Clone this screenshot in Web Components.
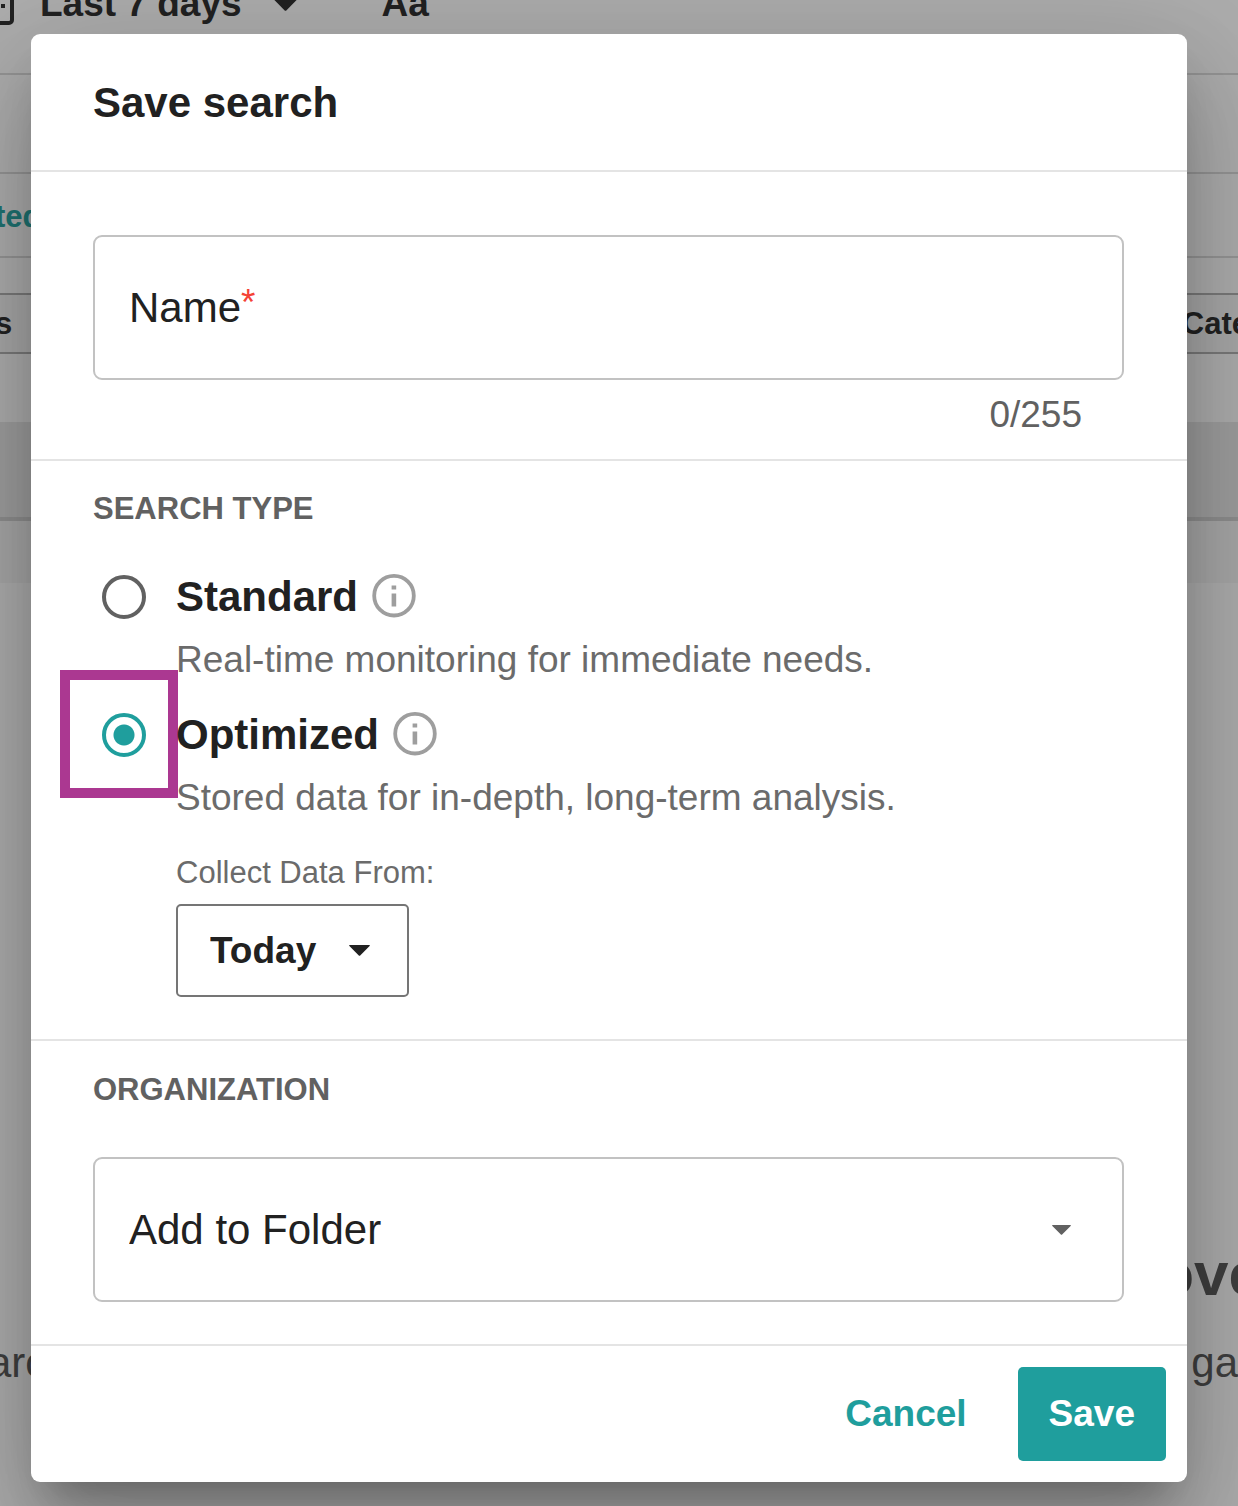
<!DOCTYPE html>
<html lang="en">
<head>
<meta charset="utf-8">
<title>Save search</title>
<style>
  html, body { margin: 0; }
  body {
    --ink: #212121; --muted: #616161; --teal: #1f9e9d; --line: #e4e4e4; --field: #c2c2c2;
    font-family: "Liberation Sans", Arial, sans-serif; color: var(--ink); background: #fff;
  }
</style>
</head>
<body>
<search-app></search-app>

<script>
const define = (name, html, setup) => {
  const template = document.createElement('template');
  template.innerHTML = html;
  customElements.define(name, class extends HTMLElement {
    constructor() {
      super();
      this.attachShadow({ mode: 'open' }).append(template.content.cloneNode(true));
    }
    connectedCallback() { if (setup) setup(this, this.shadowRoot); }
  });
};

/* Filled triangle used by every drop-down */
define('caret-icon', `
  <style>
    :host { display: block; width: 21px; height: 11px; }
    svg { display: block; width: 100%; height: 100%; }
  </style>
  <svg viewBox="0 0 21 11" aria-hidden="true"><path d="M.6 0h19.8q.8.4.2 1L11.2 10.5q-.7.7-1.4 0L.4 1Q-.2.4.6 0z" fill="currentColor"/></svg>
`);

define('info-icon', `
  <style>:host { display: block; width: 44px; height: 44px; color: #9e9e9e; } svg { display: block; overflow: visible; }</style>
  <svg width="44" height="44" viewBox="0 0 44 44" fill="none" role="img" aria-label="More information">
    <circle cx="22" cy="20.7" r="19.8" stroke="currentColor" stroke-width="3.8"/>
    <path d="M19.6 10.4h4.6v4h-4.6zM19.6 18.4h4.6v13h-4.6z" fill="currentColor"/>
  </svg>
`);

/* The search page behind the dialog */
define('search-page', `
  <style>
    :host { display: flex; flex-direction: column; overflow: hidden; color: #333; font-weight: bold; background: #fff; }
    div, header, nav { box-sizing: border-box; flex: none; }
    header { display: flex; align-items: center; height: 140px; margin-top: -65px; border-bottom: 2px solid #dcdcdc; font-size: 37px; line-height: 48px; white-space: nowrap; }
    header svg { margin-left: -26px; margin-right: 26px; flex: none; }
    header caret-icon { width: 25px; height: 13px; margin: 0 84px 0 31px; }
    .row { height: 99px; border-bottom: 2px solid #dcdcdc; }
    nav { display: flex; align-items: center; height: 84px; padding-top: 3px; border-bottom: 2px solid #dcdcdc; font-size: 31px; }
    nav a { margin-left: -5px; color: #2eaaa8; text-decoration: none; }
    .filters { display: flex; justify-content: space-between; align-items: center; height: 61px; margin: 35px -11px 68px -5px; border: solid #b4b4b4; border-width: 2px 0; background: #f8f8f8; font-size: 31px; }
    .band { height: 99px; border-bottom: 4px solid #d2d2d2; background: #e9e9e9; }
    .sub { height: 62px; background: #f6f6f6; }
    .empty { margin: 651px 0 0 -12px; color: #5e5e5e; }
    h2 { margin: 0 -25px 19px 0; font-size: 62px; line-height: 80px; text-align: right; }
    p { display: flex; justify-content: space-between; margin: 0; font-size: 42px; line-height: 60px; font-weight: normal; }
  </style>
  <header>
    <svg width="40" height="44" viewBox="0 0 40 44" fill="none" aria-hidden="true">
      <rect x="3" y="5" width="35" height="36" rx="3" stroke="currentColor" stroke-width="4"/>
      <path d="M3 14h35" stroke="currentColor" stroke-width="4"/>
      <path d="M27 22h4v4h-4zM10 22h4v4h-4z" fill="currentColor"/>
    </svg>
    <span>Last 7 days</span><caret-icon></caret-icon><span>Aa</span>
  </header>
  <div class="row"></div>
  <nav><a href="#">ted</a></nav>
  <div class="filters"><span>s</span><span>Cate</span></div>
  <div class="band"></div>
  <div class="sub"></div>
  <div class="empty"><h2>ove</h2><p><span>arc</span><span>ga</span></p></div>
`);

define('dialog-section', `
  <style>
    :host { display: block; padding: 24px 63px 42px 62px; border-bottom: 2px solid var(--line); }
    h2 { margin: 0; font-size: 31px; line-height: 48px; color: var(--muted); }
    h2[hidden] { display: none; }
  </style>
  <h2></h2><slot></slot>
`, (host, root) => {
  const h = root.querySelector('h2');
  h.textContent = host.getAttribute('heading') || '';
  h.hidden = !h.textContent;
});

define('name-field', `
  <style>
    :host { display: block; margin-top: 39px; margin-bottom: -22px; }
    .box { display: flex; align-items: center; box-sizing: border-box; height: 145px; padding: 0 34px; border: 2px solid var(--field); border-radius: 9px; font-size: 42px; }
    label { line-height: 54px; }
    label span { color: #f44336; font-size: 37px; line-height: 1; vertical-align: text-top; }
    input { flex: 1; min-width: 0; border: 0; outline: 0; padding: 0 0 0 12px; font: inherit; color: inherit; background: none; }
    .count { margin-top: 11px; padding-right: 42px; text-align: right; font-size: 37px; line-height: 48px; color: var(--muted); }
  </style>
  <div class="box"><label for="name">Name<span>*</span></label><input id="name" type="text" maxlength="255" required></div>
  <div class="count">0/255</div>
`, (host, root) => {
  const input = root.querySelector('input');
  input.addEventListener('input', () => { root.querySelector('.count').textContent = input.value.length + '/255'; });
});

define('type-option', `
  <style>
    :host { display: block; position: relative; }
    .head { display: flex; align-items: center; height: 64px; padding-left: 9px; }
    input { appearance: none; box-sizing: border-box; flex: none; width: 44px; height: 44px; margin: 0 30px 0 0; border: 4px solid var(--muted); border-radius: 50%; background: #fff; }
    input:checked { border-color: var(--teal); background: radial-gradient(circle, var(--teal) 10px, #fff 11px); }
    label { margin-right: 14px; font-size: 42px; font-weight: bold; line-height: 54px; }
    p { margin: 0 0 0 83px; font-size: 37px; line-height: 62px; color: #6b6b6b; }
    .mark { display: none; }
    :host([highlight]) .mark { display: block; position: absolute; box-sizing: border-box; left: -33px; top: -33px; width: 118px; height: 128px; border: 10px solid #ab3891; pointer-events: none; }
    :host([highlight]) label { position: relative; z-index: 1; }
    :host([highlight]) p { position: relative; z-index: 1; }
  </style>
  <div class="head"><input type="radio" id="radio" name="type"><label for="radio"></label><info-icon></info-icon></div>
  <p><slot></slot></p>
  <div class="mark"></div>
`, (host, root) => {
  root.querySelector('label').textContent = host.getAttribute('label');
  const input = root.querySelector('input');
  input.checked = host.hasAttribute('checked');
  input.addEventListener('change', () => {
    for (const other of host.parentNode.querySelectorAll('type-option'))
      if (other !== host) other.shadowRoot.querySelector('input').checked = false;
  });
});

define('collect-from', `
  <style>
    :host { display: block; margin: 20px 0 0 83px; }
    label { display: block; margin-bottom: 7px; font-size: 31px; line-height: 48px; color: #6b6b6b; }
    .box { display: inline-grid; align-items: center; vertical-align: top; }
    select { grid-area: 1 / 1; appearance: none; box-sizing: border-box; width: 233px; height: 93px; padding: 0 64px 0 32px; border: 2px solid #757575; border-radius: 5px; font: bold 37px "Liberation Sans", Arial, sans-serif; color: var(--ink); background: #fff; }
    caret-icon { grid-area: 1 / 1; justify-self: end; margin-right: 39px; pointer-events: none; }
  </style>
  <label for="from">Collect Data From:</label>
  <div class="box"><select id="from"><option>Today</option></select><caret-icon></caret-icon></div>
`);

define('folder-field', `
  <style>
    :host { display: grid; align-items: center; margin-top: 43px; }
    select { grid-area: 1 / 1; appearance: none; box-sizing: border-box; width: 100%; height: 145px; padding: 0 80px 0 34px; border: 2px solid var(--field); border-radius: 9px; font: 42px "Liberation Sans", Arial, sans-serif; color: var(--ink); background: #fff; }
    caret-icon { grid-area: 1 / 1; justify-self: end; width: 19px; height: 10px; margin-right: 53px; color: var(--muted); pointer-events: none; }
  </style>
  <select aria-label="Add to Folder"><option>Add to Folder</option></select><caret-icon></caret-icon>
`);

define('save-dialog', `
  <style>
    :host { display: block; background: #fff; border-radius: 9px;
      box-shadow: 0 29px 39px -18px rgba(0,0,0,.28), 0 63px 100px 8px rgba(0,0,0,.14), 0 24px 120px 21px rgba(0,0,0,.12); }
    h1 { margin: 0; padding: 42px 62px 40px; border-bottom: 2px solid var(--line); font-size: 42px; line-height: 54px; }
    .options { display: grid; gap: 12px; margin-top: 32px; }
    dialog-section:last-of-type { padding-top: 25px; }
    footer { display: flex; justify-content: flex-end; gap: 20px; padding: 21px; }
    button { height: 94px; padding: 0 31px; border: 0; border-radius: 5px; font: bold 37px "Liberation Sans", Arial, sans-serif; color: var(--teal); background: none; }
    .primary { color: #fff; background: var(--teal); }
  </style>
  <h1>Save search</h1>
  <dialog-section><name-field></name-field></dialog-section>
  <dialog-section heading="SEARCH TYPE">
    <div class="options">
      <type-option label="Standard">Real-time monitoring for immediate needs.</type-option>
      <type-option label="Optimized" checked highlight>Stored data for in-depth, long-term analysis.</type-option>
    </div>
    <collect-from></collect-from>
  </dialog-section>
  <dialog-section heading="ORGANIZATION"><folder-field></folder-field></dialog-section>
  <footer><button type="button">Cancel</button><button type="button" class="primary">Save</button></footer>
`);

define('search-app', `
  <style>
    :host { display: block; position: relative; overflow: hidden; }
    search-page { position: absolute; inset: 0; }
    .scrim { position: relative; padding: 34px 51px 24px 31px; background: rgba(0,0,0,.32); }
  </style>
  <search-page></search-page>
  <div class="scrim"><save-dialog role="dialog" aria-label="Save search"></save-dialog></div>
`);
</script>
</body>
</html>
